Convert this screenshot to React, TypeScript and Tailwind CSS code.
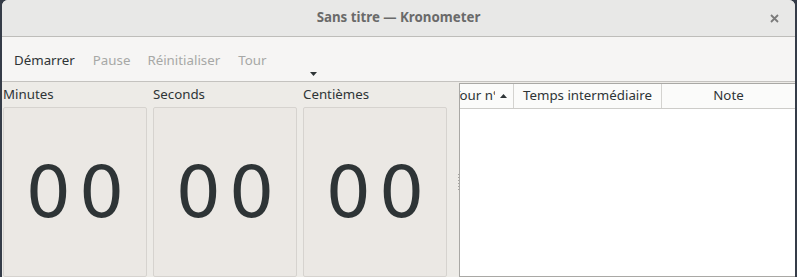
const ui = { fontFamily: '"Noto Sans", "Open Sans", "DejaVu Sans", sans-serif' };

function DigitBox({ value }: { value: string }) {
  return (
    <div className="flex-1 flex items-center justify-center bg-[#ebe8e4] border border-[#d6d3cf] rounded-[2px]">
      <span
        className="text-[71px] leading-none text-[#2e3436] tracking-[8px] pl-[8px]"
        style={{ fontFamily: '"DejaVu Sans", sans-serif' }}
      >
        {value}
      </span>
    </div>
  );
}

function Column({ label }: { label: string }) {
  return (
    <div className="w-[144px] flex flex-col">
      <div className="h-[25px] flex items-center text-[13.3px] text-[#2e3436]">{label}</div>
      <DigitBox value="00" />
    </div>
  );
}

export default function App() {
  return (
    <div className="w-[797px] h-[277px] bg-[#353c48] flex px-[2px] overflow-hidden" style={ui}>
      <div className="flex-1 flex flex-col rounded-t-[6px] overflow-hidden bg-[#edebe7]">
        {/* title bar */}
        <div className="h-[37px] shrink-0 bg-[#e8e8e7] border-b border-[#bebdba] flex items-center relative">
          <div className="flex-1 text-center text-[13.3px] font-bold text-[#6a6a6a]">
            Sans titre — Kronometer
          </div>
          <svg className="absolute right-[16px] top-[14px]" width="9" height="9" viewBox="0 0 9 9">
            <path d="M1 1 L8 8 M8 1 L1 8" stroke="#7b7b7b" strokeWidth="1.8" />
          </svg>
        </div>

        {/* toolbar */}
        <div className="h-[45px] shrink-0 bg-[#f6f5f4] border-b border-[#c4c2bf] flex items-center pl-[12px] relative text-[13.3px]">
          <span className="text-[#2e3436] pt-[4px]">Démarrer</span>
          <span className="text-[#a7a8a6] ml-[18px] pt-[4px]">Pause</span>
          <span className="text-[#a7a8a6] ml-[17px] pt-[4px]">Réinitialiser</span>
          <span className="text-[#a7a8a6] ml-[18px] pt-[4px]">Tour</span>
          <svg className="absolute left-[308px] top-[35px]" width="7" height="4" viewBox="0 0 7 4">
            <path d="M0 0 L7 0 L3.5 4 Z" fill="#2e3436" />
          </svg>
        </div>

        {/* content */}
        <div className="flex-1 flex min-h-0">
          <div className="w-[455px] flex gap-[6px] pl-[1px]">
            <Column label="Minutes" />
            <Column label="Seconds" />
            <Column label="Centièmes" />
          </div>
          <div className="w-[2px] flex flex-col justify-center items-center">
            <div className="flex flex-col gap-[2px] mt-[4px]">
              {[0, 1, 2, 3, 4, 5].map((i) => (
                <div key={i} className="w-[1px] h-[1px] bg-[#a8a6a2]" />
              ))}
            </div>
          </div>
          <div className="flex-1 flex flex-col bg-white border-l border-b border-t border-[#a9a8a5] mt-[1px]">
            <div className="h-[25px] flex border-b border-[#cdccc9] bg-[#fbfbfa] text-[13.3px] text-[#2e3436]">
              <div className="w-[54px] flex items-center overflow-hidden border-r border-[#d4d3d0]">
                <div className="w-[35px] overflow-hidden shrink-0">
                  <span className="block ml-[-7px] whitespace-nowrap">Tour n°</span>
                </div>
                <svg className="ml-[5px] shrink-0" width="7" height="4" viewBox="0 0 7 4">
                  <path d="M0 4 L7 4 L3.5 0 Z" fill="#2e3436" />
                </svg>
              </div>
              <div className="w-[148px] flex items-center pl-[9px] border-r border-[#d4d3d0] whitespace-nowrap">
                Temps intermédiaire
              </div>
              <div className="flex-1 flex items-center justify-center">Note</div>
            </div>
            <div className="flex-1" />
          </div>
        </div>
      </div>
    </div>
  );
}
